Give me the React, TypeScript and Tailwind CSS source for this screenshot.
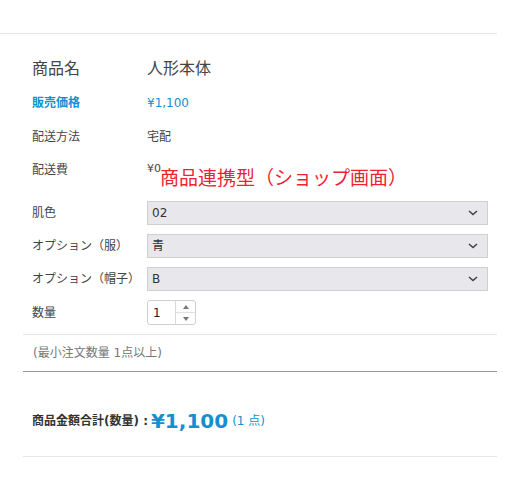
import React from "react";

const font = { fontFamily: '"DejaVu Sans", "Noto Sans CJK JP", sans-serif' };

function Chevron() {
  return (
    <svg width="10" height="6" viewBox="0 0 10 6" className="absolute right-[9px] top-1/2 -translate-y-1/2">
      <path d="M1 1 L5 4.5 L9 1" fill="none" stroke="#444" strokeWidth="1.6" />
    </svg>
  );
}

function Select({ value }: { value: string }) {
  return (
    <div className="relative h-[24px] w-[341px] bg-[#e8e8ec] border border-[#cfcfcf] flex items-center pl-[4px] text-[12px] text-[#333]">
      {value}
      <Chevron />
    </div>
  );
}

export default function App() {
  return (
    <div className="w-[507px] h-[481px] bg-white relative text-[#444]" style={font}>
      <div className="h-[34px] w-[497px] border-b border-[#e6e6e6]" />
      <div className="pl-[32px] pt-[17px]">
        <div className="flex items-center h-[35px]">
          <div className="w-[115px] text-[16px]">商品名</div>
          <div className="text-[16px]">人形本体</div>
        </div>
        <div className="flex items-center h-[34px]">
          <div className="w-[115px] text-[12px] font-bold text-[#168fd0]">販売価格</div>
          <div className="text-[12px] text-[#168fd0]">¥1,100</div>
        </div>
        <div className="flex items-center h-[33px]">
          <div className="w-[115px] text-[12px]">配送方法</div>
          <div className="text-[12px]">宅配</div>
        </div>
        <div className="flex items-center h-[33px]">
          <div className="w-[115px] text-[12px]">配送費</div>
          <div className="text-[11px]">¥0</div>
        </div>
        <div className="flex flex-col gap-[9px] mt-[15px]">
          <div className="flex items-center">
            <div className="w-[115px] text-[12px]">肌色</div>
            <Select value="02" />
          </div>
          <div className="flex items-center">
            <div className="w-[115px] text-[12px]">オプション（服）</div>
            <Select value="青" />
          </div>
          <div className="flex items-center">
            <div className="w-[115px] text-[12px]">オプション（帽子）</div>
            <Select value="B" />
          </div>
          <div className="flex items-center">
            <div className="w-[115px] text-[12px]">数量</div>
            <div className="h-[25px] w-[49px] border border-[#cfcfcf] rounded-[3px] flex">
              <div className="w-[27px] flex items-center pl-[5px] text-[12px] text-[#222]">1</div>
              <div className="flex-1 border-l border-[#d8d8d8] flex flex-col">
                <div className="flex-1 flex items-center justify-center border-b border-[#e0e0e0]">
                  <svg width="6" height="4" viewBox="0 0 6 4"><path d="M0 4 L3 0 L6 4Z" fill="#777" /></svg>
                </div>
                <div className="flex-1 flex items-center justify-center">
                  <svg width="6" height="4" viewBox="0 0 6 4"><path d="M0 0 L3 4 L6 0Z" fill="#777" /></svg>
                </div>
              </div>
            </div>
          </div>
        </div>
      </div>
      <div className="ml-[23px] w-[474px] mt-[9px] border-t border-[#e6e6e6]">
        <div className="h-[36px] flex items-center pl-[10px] text-[12px] text-[#777]">(最小注文数量 1点以上)</div>
      </div>
      <div className="ml-[23px] w-[474px] border-t border-[#999]">
        <div className="h-[84px] flex items-center pl-[9px] pt-[14px]">
          <span className="text-[12px] font-bold text-[#333]">商品金額合計(数量) : </span>
          <span className="text-[20px] font-bold text-[#168fd0] ml-[3px]">¥1,100</span>
          <span className="text-[12px] text-[#168fd0] ml-[4px]">(1 点)</span>
        </div>
      </div>
      <div className="ml-[23px] w-[474px] border-t border-[#e6e6e6]" />
      <div
        className="absolute left-[160px] top-[163px] text-[19px] text-[#ee2233] whitespace-nowrap"
        style={{ fontFamily: '"Noto Sans CJK JP", sans-serif' }}
      >
        商品連携型（ショップ画面）
      </div>
    </div>
  );
}
